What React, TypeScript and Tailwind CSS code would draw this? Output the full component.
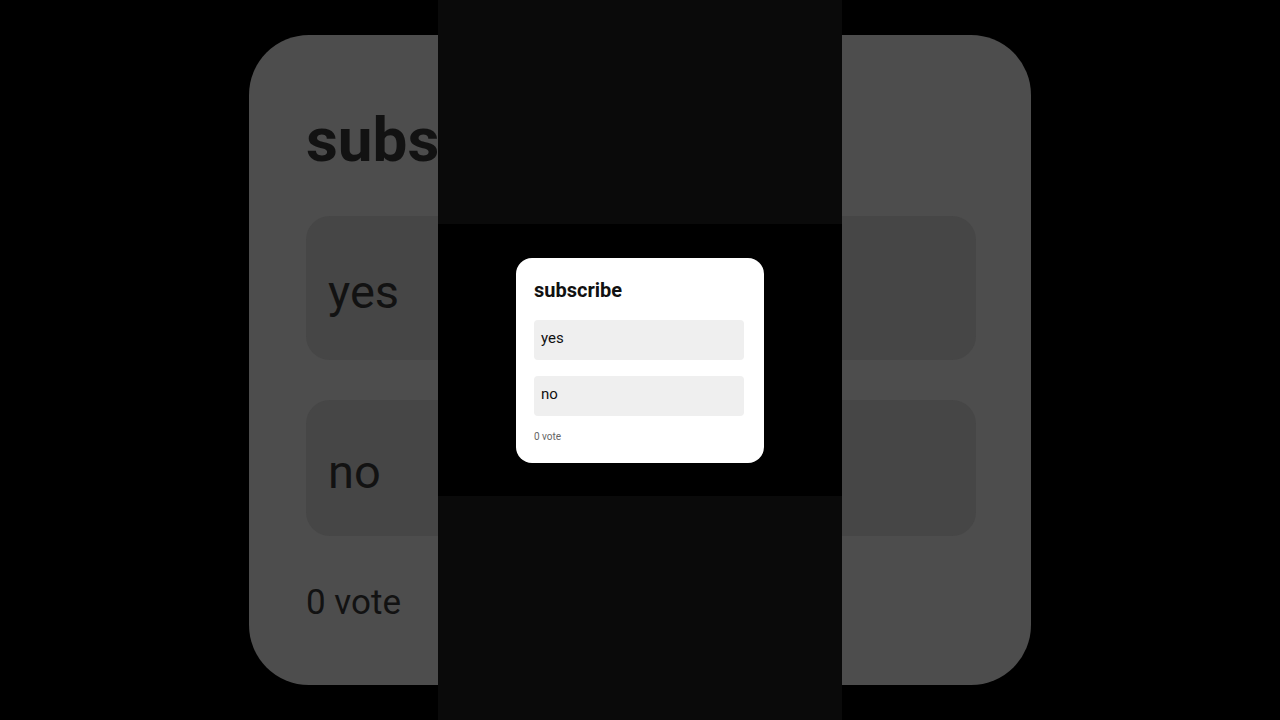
export default function App() {
  return (
    <div className="relative w-[1280px] h-[720px] bg-black overflow-hidden font-['Roboto','Liberation_Sans',sans-serif]">
      {/* dimmed, enlarged copy of the poll behind */}
      <div className="flex h-full items-center justify-center">
        <div className="flex h-[650px] w-[782px] flex-col rounded-[60px] bg-[#4d4d4d] pl-[57px] pr-[55px] pt-[74px] text-[#121212]">
          <h1 className="text-[62px] font-bold leading-none">subscribe</h1>
          <div className="mt-[45px] flex h-[144px] items-center rounded-[24px] bg-[#464646] pl-[22px] pt-[8px] text-[47px]">
            yes
          </div>
          <div className="mt-[40px] flex h-[136px] items-center rounded-[24px] bg-[#464646] pl-[22px] pt-[8px] text-[47px]">
            no
          </div>
          <p className="mt-[49px] text-[35px] leading-none">0 vote</p>
        </div>
      </div>

      {/* center column */}
      <div className="absolute inset-y-0 left-[438px] flex w-[404px] items-center justify-center bg-[#0a0a0a]">
        <div className="flex h-[272px] w-full items-center justify-center bg-black">
          <div className="flex w-[248px] flex-col rounded-2xl bg-white pl-[18px] pr-[20px] pt-[20px] pb-[19px]">
            <h2 className="text-[20px] font-bold leading-[24px] text-[#111]">subscribe</h2>
            <div className="mt-[18px] flex h-[40px] items-center rounded-[4px] bg-[#efefef] pl-[7px] pb-[3px] text-[15px] text-[#111]">
              yes
            </div>
            <div className="mt-[16px] flex h-[40px] items-center rounded-[4px] bg-[#efefef] pl-[7px] pb-[2px] text-[15px] text-[#111]">
              no
            </div>
            <p className="mt-[14px] text-[10px] leading-[14px] text-[#666]">0 vote</p>
          </div>
        </div>
      </div>
    </div>
  );
}
